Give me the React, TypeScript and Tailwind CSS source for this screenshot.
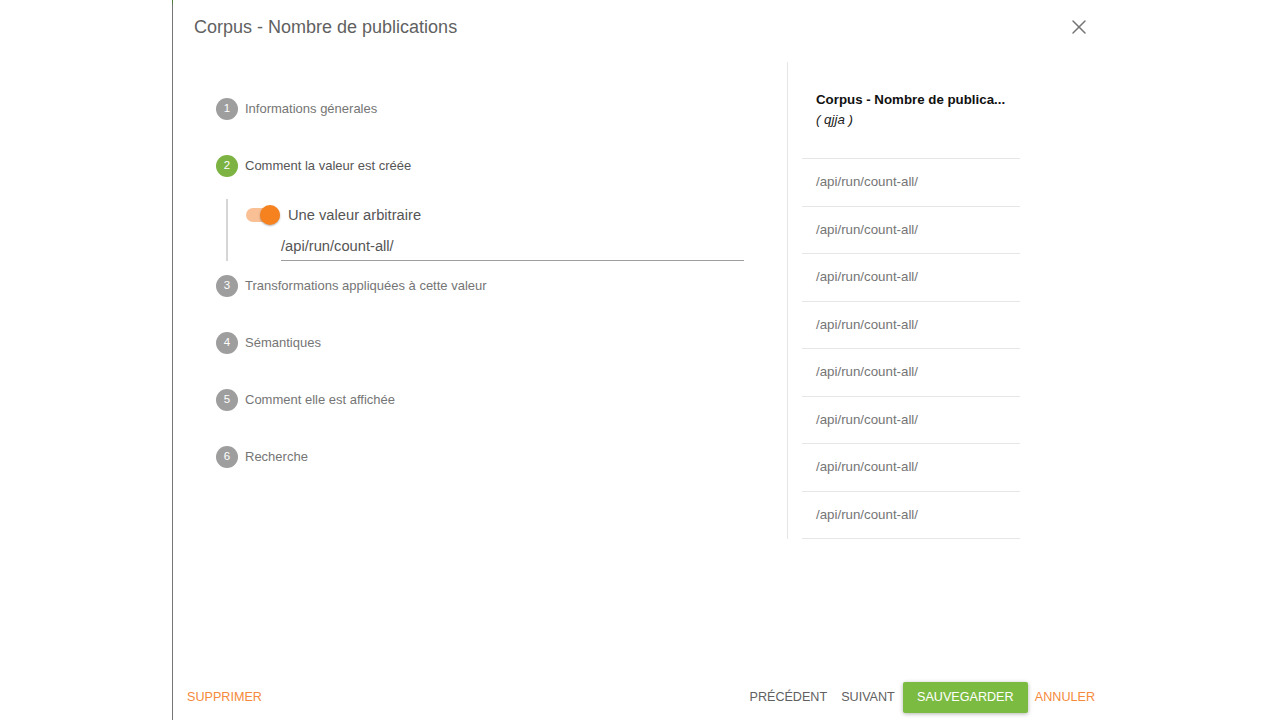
import { X } from 'lucide-react';

const steps = [
  { n: 1, label: 'Informations génerales' },
  { n: 2, label: 'Comment la valeur est créée', active: true },
  { n: 3, label: 'Transformations appliquées à cette valeur' },
  { n: 4, label: 'Sémantiques' },
  { n: 5, label: 'Comment elle est affichée' },
  { n: 6, label: 'Recherche' },
];

const rows = Array.from({ length: 8 }, () => '/api/run/count-all/');

function StepHeader({ n, label, active }: { n: number; label: string; active?: boolean }) {
  return (
    <div className="flex items-center h-[22px]">
      <span
        className={`w-[22px] h-[22px] rounded-full flex items-center justify-center text-[11.5px] text-white ${
          active ? 'bg-[#7cb342]' : 'bg-[#9e9e9e]'
        }`}
      >
        {n}
      </span>
      <span className={`ml-[7px] text-[13px] ${active ? 'text-[#555555]' : 'text-[#757575]'}`}>{label}</span>
    </div>
  );
}

export default function App() {
  return (
    <div className="w-[1280px] h-[720px] flex bg-white font-['Liberation_Sans',Arial,sans-serif] overflow-hidden">
      {/* backdrop edge */}
      <div className="w-[172px] shrink-0 bg-white" />
      <div className="w-px shrink-0 bg-gradient-to-b from-[#4a7a2a] via-[#777777] to-[#777777] from-0% via-[1%]" />

      {/* dialog */}
      <div className="w-[934px] shrink-0 flex flex-col h-full">
        <div className="flex items-center justify-between h-[52px] pt-[2px] pl-[21px] pr-[16px]">
          <h1 className="text-[18px] text-[#616161] font-normal">Corpus - Nombre de publications</h1>
          <X size={24} strokeWidth={1.5} className="text-[#757575]" />
        </div>

        <div className="flex mt-[10px]">
          {/* stepper */}
          <div className="w-[614px] shrink-0 pl-[43px] pr-[43px] pt-[36px]">
            {steps.map((s, i) => (
              <div key={s.n}>
                <StepHeader {...s} />
                {s.active ? (
                  <div className="mt-[22px] mb-[14px] ml-[10px] border-l-2 border-[#d6d6d6] h-[62px] pl-[18px]">
                    <div className="flex items-center h-[32px]">
                      <div className="relative w-[34px] h-[14px] rounded-full bg-[#f9c095]">
                        <span className="absolute -top-[3px] right-0 w-[20px] h-[20px] rounded-full bg-[#f5821f] shadow-[0_1px_2px_rgba(0,0,0,0.3)]" />
                      </div>
                      <span className="ml-[8px] text-[14.7px] text-[#555555]">Une valeur arbitraire</span>
                    </div>
                    <div className="ml-[35px] h-[30px] pt-[1px] flex items-center border-b border-[#9e9e9e] text-[14.7px] text-[#555555]">
                      /api/run/count-all/
                    </div>
                  </div>
                ) : (
                  i < steps.length - 1 && <div className="h-[35px]" />
                )}
              </div>
            ))}
          </div>

          {/* preview list */}
          <div className="border-l border-[#e6e6e6] pl-[14px]">
            <div className="w-[218px]">
              <div className="h-[97px] flex flex-col justify-center px-[14px] border-b border-[#e6e6e6]">
                <div className="text-[13.3px] font-bold text-[#111111] leading-[20px] whitespace-nowrap">Corpus - Nombre de publica...</div>
                <div className="text-[13.3px] italic text-[#222222] leading-[20px]">( qjja )</div>
              </div>
              {rows.map((r, i) => (
                <div key={i} className="h-[47.5px] flex items-center px-[14px] border-b border-[#e6e6e6] text-[13.3px] text-[#757575]">
                  {r}
                </div>
              ))}
            </div>
          </div>
        </div>

        {/* actions */}
        <div className="mt-auto h-[46px] pt-[1px] flex items-center pl-[14px] pr-[12px] text-[12.6px] uppercase">
          <button className="text-[#f58a3b] uppercase">Supprimer</button>
          <div className="ml-auto flex items-center">
            <button className="px-[7px] h-[31px] text-[#616161] uppercase">Précédent</button>
            <button className="px-[7px] h-[31px] text-[#616161] uppercase">Suivant</button>
            <button className="ml-[1px] h-[31px] w-[125px] rounded-[2px] bg-[#7cbb42] text-white uppercase shadow-[0_1px_4px_rgba(0,0,0,0.3)]">
              Sauvegarder
            </button>
            <button className="ml-[7px] h-[31px] text-[#f58a3b] uppercase">Annuler</button>
          </div>
        </div>
      </div>
      <div className="flex-1 bg-white" />
    </div>
  );
}
